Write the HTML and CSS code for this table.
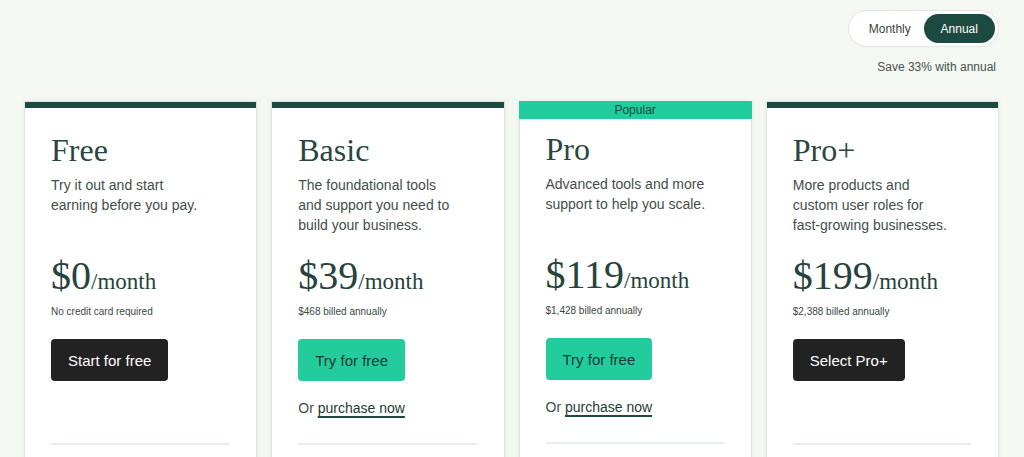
FILE: index.html
```html
<!DOCTYPE html>
<html lang="en">
<head>
<meta charset="utf-8">
<title>Pricing</title>
<link rel="stylesheet" href="styles.css">
</head>
<body>
<div class="page">
  <header class="billing">
    <div class="toggle">
      <button class="toggle-btn">Monthly</button>
      <button class="toggle-btn active">Annual</button>
    </div>
    <p class="save">Save 33% with annual</p>
  </header>

  <section class="plans">
    <article class="card">
      <div class="bar"></div>
      <div class="card-body">
        <h2 class="plan-name">Free</h2>
        <p class="plan-desc">Try it out and start earning before you pay.</p>
        <div class="price"><span class="amount">$0</span><span class="per">/month</span></div>
        <p class="note">No credit card required</p>
        <a class="btn btn-dark">Start for free</a>
        <p class="alt"></p>
        <hr class="divider">
      </div>
    </article>

    <article class="card">
      <div class="bar"></div>
      <div class="card-body">
        <h2 class="plan-name">Basic</h2>
        <p class="plan-desc">The foundational tools and support you need to build your business.</p>
        <div class="price"><span class="amount">$39</span><span class="per">/month</span></div>
        <p class="note">$468 billed annually</p>
        <a class="btn btn-green">Try for free</a>
        <p class="alt">Or <a class="link">purchase now</a></p>
        <hr class="divider">
      </div>
    </article>

    <article class="card card-popular">
      <div class="bar bar-popular">Popular</div>
      <div class="card-body">
        <h2 class="plan-name">Pro</h2>
        <p class="plan-desc">Advanced tools and more support to help you scale.</p>
        <div class="price"><span class="amount">$119</span><span class="per">/month</span></div>
        <p class="note">$1,428 billed annually</p>
        <a class="btn btn-green">Try for free</a>
        <p class="alt">Or <a class="link">purchase now</a></p>
        <hr class="divider">
      </div>
    </article>

    <article class="card">
      <div class="bar"></div>
      <div class="card-body">
        <h2 class="plan-name">Pro+</h2>
        <p class="plan-desc">More products and custom user roles for fast-growing businesses.</p>
        <div class="price"><span class="amount">$199</span><span class="per">/month</span></div>
        <p class="note">$2,388 billed annually</p>
        <a class="btn btn-dark">Select Pro+</a>
        <p class="alt"></p>
        <hr class="divider">
      </div>
    </article>
  </section>
</div>
</body>
</html>
```

FILE: styles.css
```css
* { box-sizing: border-box; }

html, body {
  margin: 0;
  padding: 0;
  background: #f5f7f2;
  font-family: "Liberation Sans", Arial, sans-serif;
  color: #3f4b47;
  overflow: hidden;
}

.page {
  padding: 10px 25px 0 24px;
}

.billing {
  display: flex;
  flex-direction: column;
  align-items: flex-end;
}

.toggle {
  display: flex;
  background: #ffffff;
  border: 1px solid #e3e6e1;
  border-radius: 19px;
  padding: 3px;
  height: 37px;
  width: 151px;
}

.toggle-btn {
  width: 72px;
  height: 29px;
  border: 0;
  border-radius: 15px;
  background: transparent;
  font-family: "Liberation Sans", Arial, sans-serif;
  font-size: 12px;
  color: #3d4240;
  padding: 0;
}

.toggle-btn:first-child {
  padding-left: 4px;
}

.toggle-btn.active {
  background: #1d4a40;
  color: #ffffff;
}

.save {
  margin: 13px 3px 0 0;
  font-size: 12px;
  line-height: 14px;
  color: #46524d;
}

.plans {
  display: grid;
  grid-template-columns: repeat(4, 1fr);
  gap: 14px;
  margin-top: 27px;
  align-items: start;
}

.card {
  background: #ffffff;
  border: 1px solid #dce6df;
  box-shadow: 0 0 4px rgba(30, 74, 64, 0.07);
  height: 400px;
}

.bar {
  height: 6px;
  background: #1d4a40;
}

.bar-popular {
  height: 18px;
  margin: -1px -1px 0 -1px;
  background: #22cc9c;
  color: #1d4a40;
  font-size: 12px;
  line-height: 18px;
  text-align: center;
}

.card-body {
  padding: 22px 27px 0 26px;
}

.card-popular .card-body {
  padding-top: 10px;
}

.plan-name {
  margin: 0 0 5px 0;
  font-family: "Liberation Serif", "Times New Roman", serif;
  font-weight: 400;
  font-size: 32px;
  line-height: 40px;
  color: #2a4641;
}

.plan-desc {
  margin: 0;
  min-height: 60px;
  max-width: 160px;
  font-size: 14px;
  line-height: 20px;
  color: #434e4a;
}

.price {
  margin-top: 17px;
  height: 48px;
  line-height: 48px;
  font-family: "Liberation Serif", "Times New Roman", serif;
  color: #26433d;
  white-space: nowrap;
}

.amount {
  font-size: 40px;
}

.per {
  font-size: 23px;
}

.note {
  margin: 5px 0 0 0;
  font-size: 10px;
  line-height: 14px;
  color: #3c4643;
}

.btn {
  display: inline-flex;
  align-items: center;
  height: 42px;
  margin-top: 20px;
  padding: 0 17px;
  border-radius: 4px;
  font-size: 15px;
  text-decoration: none;
}

.btn-dark {
  background: #222222;
  color: #ffffff;
}

.btn-green {
  background: #22cc9c;
  color: #1c3b34;
}

.alt {
  margin: 17px 0 0 0;
  height: 20px;
  font-size: 14px;
  line-height: 20px;
  color: #434e4a;
}

.link {
  color: #1f3a33;
  text-decoration: underline;
  text-decoration-thickness: 1.5px;
  text-underline-offset: 3px;
  text-decoration-color: #1d4a40;
}

.divider {
  margin: 25px 0 0 0;
  border: 0;
  height: 2px;
  background: #e7ede9;
}
```
